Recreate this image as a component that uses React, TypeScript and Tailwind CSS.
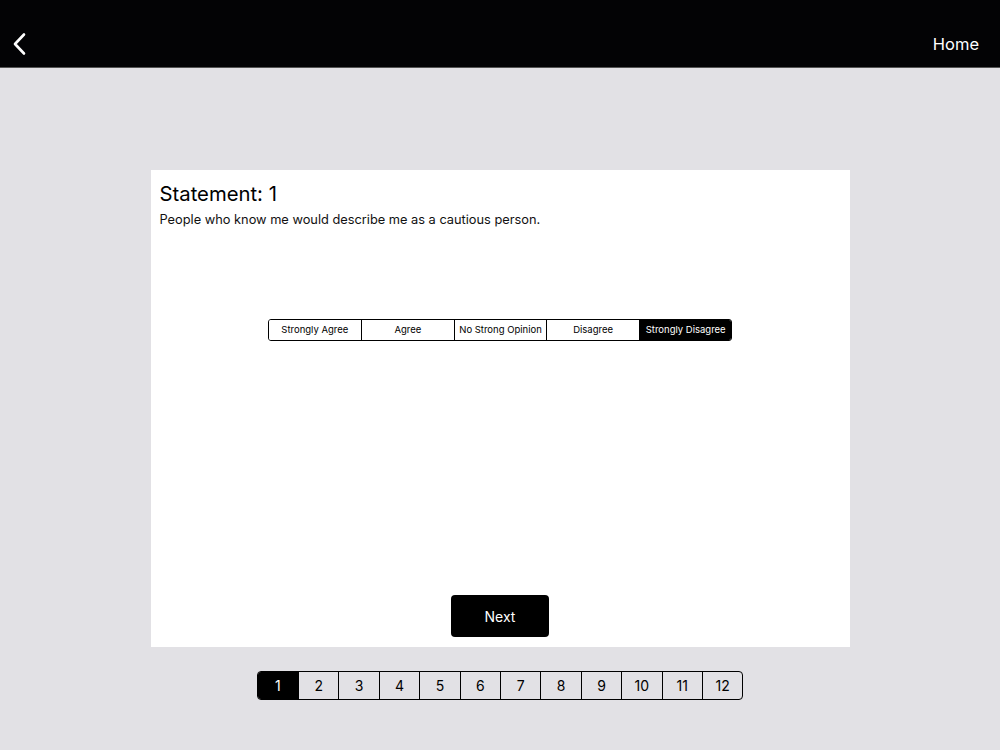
import React from "react";

export default function App() {
  const options = ["Strongly Agree", "Agree", "No Strong Opinion", "Disagree", "Strongly Disagree"];
  const selected = 4;
  const pages = Array.from({ length: 12 }, (_, i) => i + 1);
  return (
    <div
      className="w-[1000px] h-[750px] bg-[#e2e1e5] flex flex-col"
      style={{ fontFamily: "Inter, 'Liberation Sans', sans-serif" }}
    >
      <div className="h-[68px] bg-[#030305] border-b border-[#555] flex items-center justify-between pt-[21px] px-[12px]">
        <svg width="16" height="24" viewBox="0 0 16 24">
          <path d="M12 2.5 L3 12 L12 21.5" fill="none" stroke="white" strokeWidth="2.6" strokeLinecap="round" strokeLinejoin="round" />
        </svg>
        <span className="text-white text-[16.5px] mr-[9px]">Home</span>
      </div>
      <div className="flex flex-col items-center">
        <div className="mt-[102px] w-[699px] h-[477px] bg-white flex flex-col px-[9px] pt-[11px] pb-[10px]">
          <div className="text-[20.3px] text-black leading-[26px]">Statement: 1</div>
          <div className="text-[12.8px] text-[#111] mt-[4px] leading-[18px]">
            People who know me would describe me as a cautious person.
          </div>
          <div className="flex justify-center mt-[90px]">
            <div className="flex border border-black rounded-[3px] overflow-hidden">
              {options.map((o, i) => (
                <div
                  key={o}
                  className={`w-[92.6px] h-[20px] flex items-center justify-center text-[9.5px] ${
                    i > 0 ? "border-l border-black" : ""
                  } ${i === selected ? "bg-black text-white" : "bg-white text-black"}`}
                >
                  {o}
                </div>
              ))}
            </div>
          </div>
          <div className="flex-1" />
          <div className="flex justify-center">
            <button className="w-[98px] h-[42px] bg-black text-white rounded-[4px] text-[14px]">Next</button>
          </div>
        </div>
        <div className="mt-[24px] flex border border-black rounded-[4px] overflow-hidden">
          {pages.map((p, i) => (
            <div
              key={p}
              className={`w-[40.4px] h-[27px] flex items-center justify-center text-[14px] ${
                i > 0 ? "border-l border-black" : ""
              } ${i === 0 ? "bg-black text-white" : "text-black"}`}
            >
              {p}
            </div>
          ))}
        </div>
      </div>
    </div>
  );
}
